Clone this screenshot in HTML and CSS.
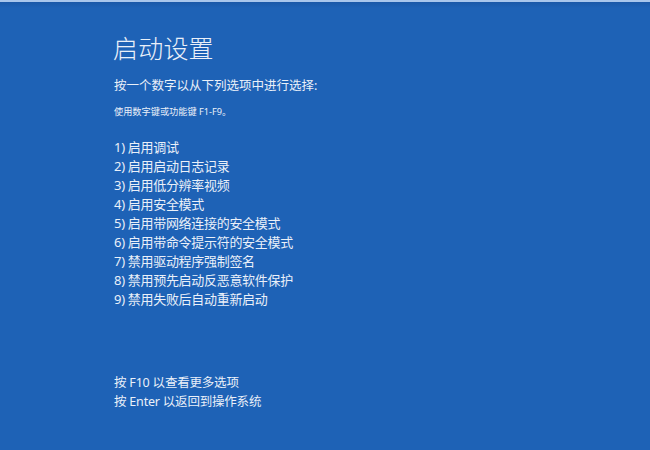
FILE: index.html
```html
<!DOCTYPE html>
<html lang="zh-CN">
<head>
<meta charset="utf-8">
<title>启动设置</title>
<link rel="stylesheet" href="styles.css">
</head>
<body>
<div class="screen">
  <div class="content">
    <h1 class="title">启动设置</h1>
    <p class="prompt">按一个数字以从下列选项中进行选择:</p>
    <p class="hint">使用数字键或功能键 F1-F9。</p>
    <ol class="options">
      <li>1) 启用调试</li>
      <li>2) 启用启动日志记录</li>
      <li>3) 启用低分辨率视频</li>
      <li>4) 启用安全模式</li>
      <li>5) 启用带网络连接的安全模式</li>
      <li>6) 启用带命令提示符的安全模式</li>
      <li>7) 禁用驱动程序强制签名</li>
      <li>8) 禁用预先启动反恶意软件保护</li>
      <li>9) 禁用失败后自动重新启动</li>
    </ol>
    <div class="footer">
      <p>按 F10 以查看更多选项</p>
      <p>按 Enter 以返回到操作系统</p>
    </div>
  </div>
</div>
</body>
</html>
```

FILE: styles.css
```css
html, body {
  margin: 0;
  padding: 0;
  height: 100%;
}
body {
  background: #1e62b6;
  font-family: "Noto Sans", "Noto Sans CJK SC", sans-serif;
  color: #eaf0f9;
}
.screen {
  height: 100%;
  box-sizing: border-box;
  border-top: 2px solid #a9c6ec;
  background: linear-gradient(to bottom, #1a58a8 0, #1e62b6 6px, #1e62b6 100%);
}
.content {
  padding: 31px 0 0 113px;
}
.title {
  margin: 0;
  font-size: 25px;
  font-weight: 300;
  line-height: 30px;
  letter-spacing: 0.2px;
}
.prompt {
  margin: 13px 0 0 1px;
  font-size: 12.5px;
  line-height: 19px;
}
.hint {
  margin: 10px 0 0 1px;
  font-size: 9.2px;
  line-height: 14px;
}
.options {
  list-style: none;
  margin: 19px 0 0 1px;
  padding: 0;
  font-size: 13px;
  line-height: 19px;
  letter-spacing: -0.3px;
}
.footer {
  margin: 64px 0 0 1px;
  font-size: 12.5px;
  line-height: 19px;
  letter-spacing: -0.2px;
}
.footer p {
  margin: 0;
}
```
